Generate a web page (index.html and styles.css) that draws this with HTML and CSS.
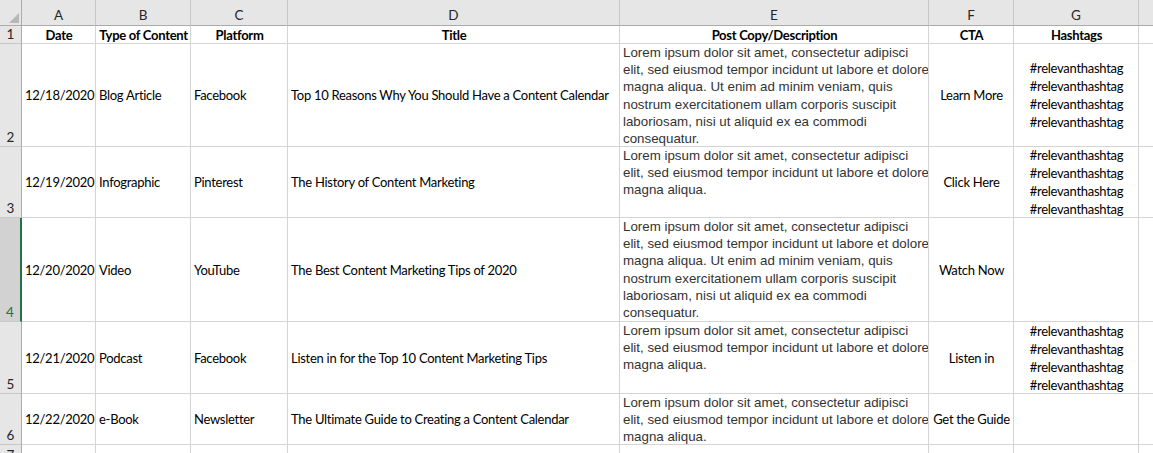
FILE: index.html
```html
<!DOCTYPE html>
<html>
<head>
<meta charset="utf-8">
<link rel="stylesheet" href="styles.css">
</head>
<body>
<div class="sheet">
  <div class="corner"><span class="tri"></span></div>
  <div class="colhead">A</div>
  <div class="colhead">B</div>
  <div class="colhead">C</div>
  <div class="colhead">D</div>
  <div class="colhead">E</div>
  <div class="colhead">F</div>
  <div class="colhead">G</div>
  <div class="colhead last"></div>

  <div class="rowhead">1</div>
  <div class="cell hdr">Date</div>
  <div class="cell hdr">Type of Content</div>
  <div class="cell hdr">Platform</div>
  <div class="cell hdr">Title</div>
  <div class="cell hdr">Post Copy/Description</div>
  <div class="cell hdr">CTA</div>
  <div class="cell hdr">Hashtags</div>
  <div class="cell"></div>

  <div class="rowhead">2</div>
  <div class="cell">12/18/2020</div>
  <div class="cell">Blog Article</div>
  <div class="cell">Facebook</div>
  <div class="cell">Top 10 Reasons Why You Should Have a Content Calendar</div>
  <div class="cell copy">Lorem ipsum dolor sit amet, consectetur adipisci<br>elit, sed eiusmod tempor incidunt ut labore et dolore<br>magna aliqua. Ut enim ad minim veniam, quis<br>nostrum exercitationem ullam corporis suscipit<br>laboriosam, nisi ut aliquid ex ea commodi<br>consequatur.</div>
  <div class="cell center">Learn More</div>
  <div class="cell tags">#relevanthashtag<br>#relevanthashtag<br>#relevanthashtag<br>#relevanthashtag</div>
  <div class="cell"></div>

  <div class="rowhead">3</div>
  <div class="cell">12/19/2020</div>
  <div class="cell">Infographic</div>
  <div class="cell">Pinterest</div>
  <div class="cell">The History of Content Marketing</div>
  <div class="cell copy">Lorem ipsum dolor sit amet, consectetur adipisci<br>elit, sed eiusmod tempor incidunt ut labore et dolore<br>magna aliqua.</div>
  <div class="cell center">Click Here</div>
  <div class="cell tags">#relevanthashtag<br>#relevanthashtag<br>#relevanthashtag<br>#relevanthashtag</div>
  <div class="cell"></div>

  <div class="rowhead selected">4</div>
  <div class="cell">12/20/2020</div>
  <div class="cell">Video</div>
  <div class="cell">YouTube</div>
  <div class="cell">The Best Content Marketing Tips of 2020</div>
  <div class="cell copy">Lorem ipsum dolor sit amet, consectetur adipisci<br>elit, sed eiusmod tempor incidunt ut labore et dolore<br>magna aliqua. Ut enim ad minim veniam, quis<br>nostrum exercitationem ullam corporis suscipit<br>laboriosam, nisi ut aliquid ex ea commodi<br>consequatur.</div>
  <div class="cell center">Watch Now</div>
  <div class="cell tags"></div>
  <div class="cell"></div>

  <div class="rowhead">5</div>
  <div class="cell">12/21/2020</div>
  <div class="cell">Podcast</div>
  <div class="cell">Facebook</div>
  <div class="cell">Listen in for the Top 10 Content Marketing Tips</div>
  <div class="cell copy">Lorem ipsum dolor sit amet, consectetur adipisci<br>elit, sed eiusmod tempor incidunt ut labore et dolore<br>magna aliqua.</div>
  <div class="cell center">Listen in</div>
  <div class="cell tags">#relevanthashtag<br>#relevanthashtag<br>#relevanthashtag<br>#relevanthashtag</div>
  <div class="cell"></div>

  <div class="rowhead">6</div>
  <div class="cell">12/22/2020</div>
  <div class="cell">e-Book</div>
  <div class="cell">Newsletter</div>
  <div class="cell">The Ultimate Guide to Creating a Content Calendar</div>
  <div class="cell copy">Lorem ipsum dolor sit amet, consectetur adipisci<br>elit, sed eiusmod tempor incidunt ut labore et dolore<br>magna aliqua.</div>
  <div class="cell center">Get the Guide</div>
  <div class="cell tags"></div>
  <div class="cell"></div>

  <div class="rowhead top">7</div>
  <div class="cell"></div>
  <div class="cell"></div>
  <div class="cell"></div>
  <div class="cell"></div>
  <div class="cell"></div>
  <div class="cell"></div>
  <div class="cell"></div>
  <div class="cell"></div>
</div>
</body>
</html>
```

FILE: styles.css
```css
html, body {
  margin: 0;
  padding: 0;
  background: #ffffff;
  overflow: hidden;
}

.sheet {
  display: grid;
  grid-template-columns: 22px 74px 95px 97px 332px 309px 85px 125px 40px;
  grid-template-rows: 26px 18px 103px 71px 104px 72px 51px 18px;
  width: 1153px;
  font-family: Lato, "Liberation Sans", sans-serif;
  font-size: 13px;
  letter-spacing: -0.28px;
  color: #000;
}

.corner {
  background: #e6e6e6;
  border-right: 1px solid #ababab;
  border-bottom: 1px solid #ababab;
  box-sizing: border-box;
  position: relative;
}

.tri {
  position: absolute;
  right: 2px;
  bottom: 2px;
  width: 0;
  height: 0;
  border-left: 10px solid transparent;
  border-bottom: 10px solid #b7b7b7;
}

.colhead {
  background: #e6e6e6;
  border-bottom: 1px solid #ababab;
  border-right: 1px solid #c6c6c6;
  box-sizing: border-box;
  display: flex;
  align-items: flex-end;
  justify-content: center;
  padding-bottom: 2px;
  color: #262626;
  font-size: 13.5px;
  letter-spacing: 0;
}

.colhead.last {
  border-right: none;
}

.rowhead {
  background: #e6e6e6;
  border-right: 1px solid #ababab;
  border-bottom: 1px solid #c8c8c8;
  box-sizing: border-box;
  display: flex;
  align-items: flex-end;
  justify-content: center;
  padding-bottom: 1px;
  color: #262626;
  font-size: 13.5px;
  letter-spacing: 0;
  line-height: 16px;
}

.rowhead.selected {
  background: #d2d2d2;
  border-right: 2px solid #217346;
  color: #217346;
}

.rowhead.top {
  align-items: flex-start;
  padding-top: 2px;
}

.cell {
  border-right: 1px solid #d4d4d4;
  border-bottom: 1px solid #d4d4d4;
  box-sizing: border-box;
  display: flex;
  align-items: center;
  padding: 0 2px 0 3px;
  white-space: nowrap;
  overflow: hidden;
}

.cell.hdr {
  font-weight: bold;
  justify-content: center;
}

.cell.center {
  justify-content: center;
}

.cell.copy {
  align-items: flex-start;
  font-family: "Liberation Sans", Arial, sans-serif;
  font-size: 13.33px;
  letter-spacing: 0;
  line-height: 17.2px;
  color: #333;
  padding-top: 0;
}

.cell.tags {
  justify-content: center;
  text-align: left;
  line-height: 18px;
}
```
